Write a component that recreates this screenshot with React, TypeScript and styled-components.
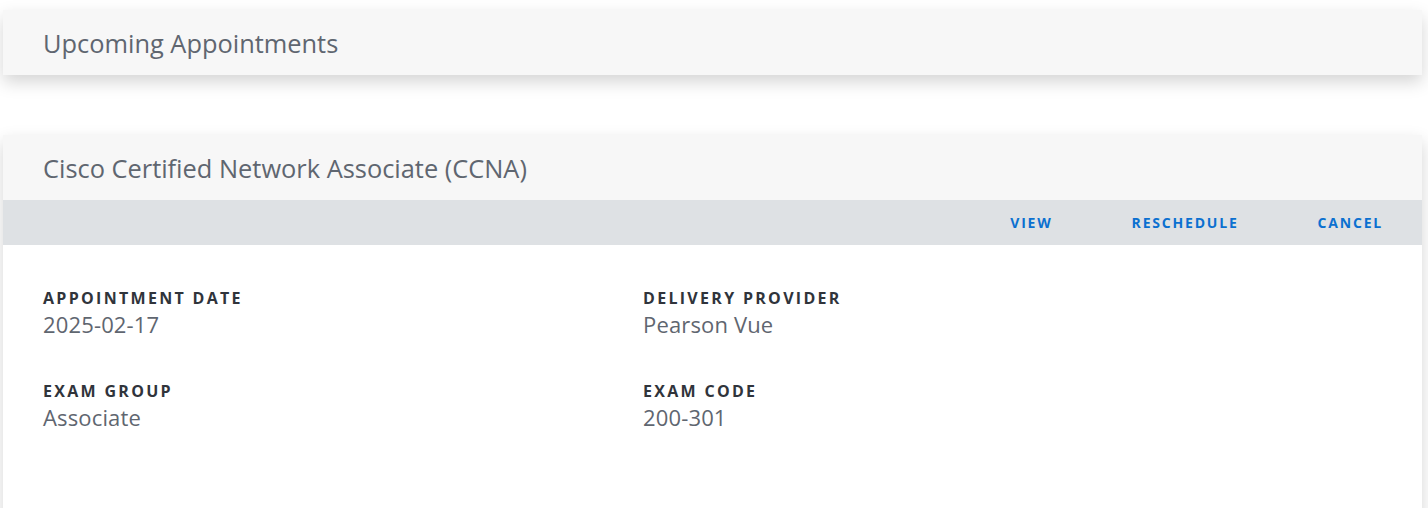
import styled, { createGlobalStyle } from 'styled-components';

const GlobalStyle = createGlobalStyle`
  body {
    margin: 0;
    background: #fff;
    font-family: "Open Sans", "Noto Sans", Arial, sans-serif;
  }
`;

const Page = styled.div`
  display: flex;
  flex-direction: column;
  gap: 60px;
  padding: 10px 6px 0 3px;
`;

const Card = styled.section`
  background: #fff;
  box-shadow: 0 7px 16px rgba(0, 0, 0, 0.17);
`;

const CardHeader = styled.header`
  height: 65px;
  display: flex;
  align-items: center;
  padding: 0 40px;
  background: #f7f7f7;
`;

const Title = styled.h2`
  margin: 0;
  font-size: 25.4px;
  font-weight: 400;
  color: #5f6670;
`;

const ActionBar = styled.nav`
  height: 45px;
  display: flex;
  justify-content: flex-end;
  align-items: center;
  background: #dee1e4;
`;

const ActionLink = styled.a`
  padding: 0 39px 0 40px;
  font-size: 14px;
  font-weight: 700;
  letter-spacing: 1.8px;
  text-transform: uppercase;
  color: #0b70d0;
  cursor: pointer;
`;

const Details = styled.div`
  display: grid;
  grid-template-columns: 600px 600px;
  row-gap: 41px;
  padding: 42px 40px 110px;
`;

const Field = styled.div`
  display: flex;
  flex-direction: column;
`;

const Label = styled.span`
  font-size: 16px;
  font-weight: 700;
  letter-spacing: 2.3px;
  text-transform: uppercase;
  color: #30343b;
  line-height: 22px;
`;

const Value = styled.span`
  font-size: 22px;
  letter-spacing: 0.15px;
  color: #5f6670;
  line-height: 30px;
`;

const fields = [
  { label: 'Appointment Date', value: '2025-02-17' },
  { label: 'Delivery Provider', value: 'Pearson Vue' },
  { label: 'Exam Group', value: 'Associate' },
  { label: 'Exam Code', value: '200-301' },
];

export default function App() {
  return (
    <>
      <GlobalStyle />
      <Page>
        <Card>
          <CardHeader>
            <Title>Upcoming Appointments</Title>
          </CardHeader>
        </Card>
        <Card>
          <CardHeader>
            <Title>Cisco Certified Network Associate (CCNA)</Title>
          </CardHeader>
          <ActionBar>
            <ActionLink>View</ActionLink>
            <ActionLink>Reschedule</ActionLink>
            <ActionLink>Cancel</ActionLink>
          </ActionBar>
          <Details>
            {fields.map((f) => (
              <Field key={f.label}>
                <Label>{f.label}</Label>
                <Value>{f.value}</Value>
              </Field>
            ))}
          </Details>
        </Card>
      </Page>
    </>
  );
}
